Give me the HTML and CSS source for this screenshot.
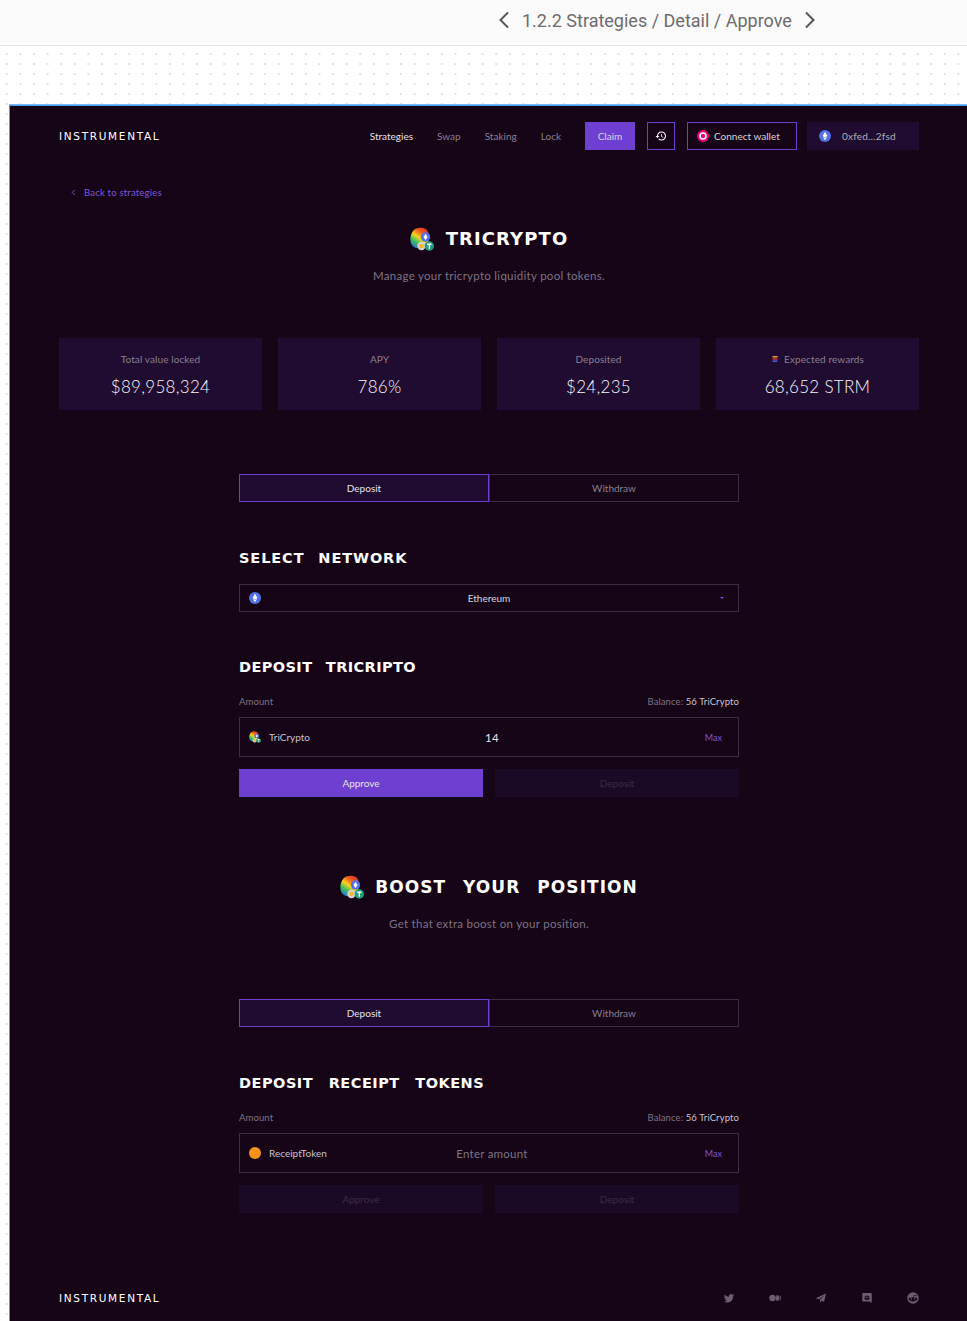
FILE: index.html
```html
<!DOCTYPE html>
<html lang="en">

<head>
  <meta charset="UTF-8">
  <meta name="viewport" content="width=device-width, initial-scale=1.0">
  <title>1.2.2 Strategies / Detail / Approve</title>
  <link rel="stylesheet" href="styles.css">
</head>

<body>
<svg class="defs" width="0" height="0" aria-hidden="true">
  <defs>
    <linearGradient id="blob" x1="0.8" y1="0" x2="0.2" y2="1">
      <stop offset="0" stop-color="#e0262c" />
      <stop offset="0.3" stop-color="#f0701d" />
      <stop offset="0.5" stop-color="#f7d51d" />
      <stop offset="0.72" stop-color="#3fc35b" />
      <stop offset="1" stop-color="#2a6ad8" />
    </linearGradient>
    <symbol id="tricrypto" viewBox="0 0 24 24">
      <path d="M3 4 C6 0 12 0 16 2 C19 5 20 10 18 15 L10 21 C5 22 1 19 0.500 14 C0 10 1 7 3 4z" fill="url(#blob)" />
      <circle cx="15.500" cy="10" r="4.700" fill="#5470e8" />
      <path d="M15.500 6.800 17.500 10 15.500 13.200 13.500 10z" fill="#fff" />
      <circle cx="11.500" cy="19" r="4.200" fill="#d8d3d0" />
      <circle cx="11.500" cy="19" r="2.300" fill="#f4b731" />
      <circle cx="19.300" cy="19" r="4.700" fill="#26a17b" />
      <path d="M17.200 16.600h4.200v1.300h-1.450v3.800h-1.300v-3.800h-1.450z" fill="#fff" />
    </symbol>
    <symbol id="eth" viewBox="0 0 12 12">
      <circle cx="6" cy="6" r="6" fill="#5470e8" />
      <path d="M6 1.800 8.400 6 6 7.400 3.600 6zM3.800 6.800 6 8.100l2.200-1.300L6 10.200z" fill="#fff" />
    </symbol>
  </defs>
</svg>

<div class="topbar">
  <svg class="topbar-arrow" viewBox="0 0 12 18"><path d="M10 1.500 2.500 9l7.500 7.500" /></svg>
  <span class="topbar-title">1.2.2 Strategies / Detail / Approve</span>
  <svg class="topbar-arrow" viewBox="0 0 12 18"><path d="M2 1.500 9.500 9 2 16.500" /></svg>
</div>

<div class="canvas">
  <div class="frame">
    <header class="nav">
      <div class="logo">INSTRUMENTAL</div>
      <nav class="nav-links">
        <a class="nav-link active">Strategies</a>
        <a class="nav-link">Swap</a>
        <a class="nav-link">Staking</a>
        <a class="nav-link">Lock</a>
      </nav>
      <button class="btn-claim">Claim</button>
      <button class="btn-history">
        <svg viewBox="0 0 24 24" width="12" height="12"><path fill="#fff" d="M13 3a9 9 0 0 0-9 9H1l3.890 3.890.07.14L9 12H6c0-3.870 3.130-7 7-7s7 3.130 7 7-3.130 7-7 7c-1.930 0-3.680-.79-4.940-2.060l-1.420 1.420A8.954 8.954 0 0 0 13 21a9 9 0 0 0 0-18zm-1 5v5l4.280 2.540.72-1.210-3.500-2.080V8H12z" /></svg>
      </button>
      <button class="btn-connect">
        <svg viewBox="0 0 12 12" width="12" height="12"><circle cx="6" cy="6" r="6" fill="#e6007a" /><circle cx="6" cy="6" r="3" fill="none" stroke="#fff" stroke-width="1.500" /></svg>
        Connect wallet
      </button>
      <div class="wallet">
        <svg width="12" height="12"><use href="#eth" /></svg>
        0xfed...2fsd
      </div>
    </header>

    <a class="back-link">
      <svg viewBox="0 0 6 8" width="5" height="7"><path d="M4.500 1 1.500 4l3 3" fill="none" stroke="#7d55dd" stroke-width="1.200" /></svg>
      Back to strategies
    </a>

    <section class="hero hero-first">
      <div class="hero-title">
        <svg width="24" height="24"><use href="#tricrypto" /></svg>
        <h1>TRICRYPTO</h1>
      </div>
      <p class="hero-sub">Manage your tricrypto liquidity pool tokens.</p>
    </section>

    <section class="stats">
      <div class="stat">
        <div class="stat-label">Total value locked</div>
        <div class="stat-value">$89,958,324</div>
      </div>
      <div class="stat">
        <div class="stat-label">APY</div>
        <div class="stat-value">786%</div>
      </div>
      <div class="stat">
        <div class="stat-label">Deposited</div>
        <div class="stat-value">$24,235</div>
      </div>
      <div class="stat">
        <div class="stat-label">
          <svg viewBox="0 0 8 8" width="8" height="8"><rect x="1.500" y="1" width="5" height="1.500" fill="#e6a23c" /><rect x="1.500" y="3.200" width="5" height="1.500" fill="#d8352f" /><rect x="1.500" y="5.400" width="5" height="1.500" fill="#4a63e0" /></svg>
          Expected rewards
        </div>
        <div class="stat-value">68,652 STRM</div>
      </div>
    </section>

    <main class="column">
      <div class="tabs">
        <div class="tab active">Deposit</div>
        <div class="tab">Withdraw</div>
      </div>

      <h2 class="section-title title-network">SELECT NETWORK</h2>
      <div class="select">
        <svg width="12" height="12"><use href="#eth" /></svg>
        <span class="select-value">Ethereum</span>
        <span class="select-caret"></span>
      </div>

      <h2 class="section-title title-deposit">DEPOSIT TRICRIPTO</h2>
      <div class="amount-head">
        <span>Amount</span>
        <span>Balance: <b>56 TriCrypto</b></span>
      </div>
      <div class="amount-box">
        <div class="token">
          <svg width="12" height="12"><use href="#tricrypto" /></svg>
          TriCrypto
        </div>
        <input class="amount-input" type="text" value="14" placeholder="Enter amount">
        <a class="max">Max</a>
      </div>
      <div class="actions">
        <button class="action primary">Approve</button>
        <button class="action">Deposit</button>
      </div>

      <section class="hero hero-boost">
        <div class="hero-title">
          <svg width="24" height="24"><use href="#tricrypto" /></svg>
          <h1>BOOST YOUR POSITION</h1>
        </div>
        <p class="hero-sub">Get that extra boost on your position.</p>
      </section>

      <div class="tabs">
        <div class="tab active">Deposit</div>
        <div class="tab">Withdraw</div>
      </div>

      <h2 class="section-title title-receipt">DEPOSIT RECEIPT TOKENS</h2>
      <div class="amount-head">
        <span>Amount</span>
        <span>Balance: <b>56 TriCrypto</b></span>
      </div>
      <div class="amount-box">
        <div class="token">
          <span class="token-dot"></span>
          ReceiptToken
        </div>
        <input class="amount-input" type="text" placeholder="Enter amount">
        <a class="max">Max</a>
      </div>
      <div class="actions">
        <button class="action">Approve</button>
        <button class="action">Deposit</button>
      </div>
    </main>

    <footer class="footer">
      <div class="logo">INSTRUMENTAL</div>
      <div class="socials">
        <svg viewBox="0 0 24 24"><path d="M22.460 6c-.77.35-1.600.58-2.460.69.88-.53 1.560-1.370 1.880-2.380-.83.5-1.750.85-2.720 1.050C18.370 4.500 17.260 4 16 4c-2.350 0-4.270 1.920-4.270 4.290 0 .34.04.67.11.98C8.280 9.090 5.110 7.380 3 4.790c-.37.63-.58 1.370-.58 2.150 0 1.490.75 2.810 1.910 3.560-.71 0-1.370-.2-1.950-.5v.03c0 2.080 1.480 3.820 3.440 4.210a4.220 4.220 0 0 1-1.930.07 4.280 4.280 0 0 0 4 2.980 8.521 8.521 0 0 1-5.330 1.840c-.34 0-.68-.02-1.020-.06C3.440 20.290 5.700 21 8.120 21 16 21 20.330 14.460 20.330 8.790c0-.19 0-.37-.01-.56.84-.6 1.560-1.360 2.140-2.230z" /></svg>
        <svg viewBox="0 0 24 24"><ellipse cx="7" cy="12" rx="6.500" ry="6.500" /><ellipse cx="17" cy="12" rx="3.200" ry="6" /><ellipse cx="22.300" cy="12" rx="1.200" ry="5.300" /></svg>
        <svg viewBox="0 0 24 24"><path d="M22 3 1.500 12.500l6.500 2L18.500 7 10 15.500V21l3.500-3.800 4.500 2.800z" /></svg>
        <svg viewBox="0 0 24 24"><path fill-rule="evenodd" d="M4 2h16a1.500 1.500 0 0 1 1.500 1.500V22l-4-3H4a1.500 1.500 0 0 1-1.500-1.500v-14A1.500 1.500 0 0 1 4 2zm3 12.500c3 1.500 7 1.500 10 0l-1-6.500c-2.500-1-5.500-1-8 0zM9.500 9.500h2v2.500h-2zm3 0h2v2.500h-2z" /></svg>
        <svg viewBox="0 0 24 24"><path fill-rule="evenodd" d="M12 .5a11.500 11.500 0 1 1 0 23 11.500 11.500 0 0 1 0-23zM4.500 11.500c-1.500 0-2 2-.8 2.600C4 17 7.500 19 12 19s8-2 8.300-4.900c1.200-.6.7-2.600-.8-2.600-.6 0-1 .2-1.300.5-1.400-1-3.400-1.600-5.400-1.700l1-3.300 2.700.6a1.300 1.300 0 1 0 .2-1l-3.300-.7-1.300 4.400c-2.100.1-4 .7-5.300 1.700-.3-.3-.8-.5-1.300-.5zM8.800 12.300a1.500 1.500 0 1 1 0 3 1.500 1.500 0 0 1 0-3zm6.400 0a1.500 1.500 0 1 1 0 3 1.500 1.500 0 0 1 0-3z" /></svg>
      </div>
    </footer>
  </div>
</div>
</body>

</html>
```

FILE: styles.css
```css
* {
  box-sizing: border-box;
}

html, body {
  margin: 0;
  height: 1321px;
  overflow: hidden;
}

body {
  display: flex;
  flex-direction: column;
  background: #fff;
  font-family: Lato, 'Noto Sans', sans-serif;
}

.defs {
  position: absolute;
}

.topbar {
  display: flex;
  align-items: center;
  gap: 12px;
  height: 46px;
  flex: none;
  padding: 0 0 5px 498px;
  background: #fafafa;
  border-bottom: 1px solid #e6e6e6;
  color: #6f6a6f;
  font-family: Roboto, sans-serif;
  font-size: 18px;
}

.topbar-arrow {
  width: 12px;
  height: 18px;
  fill: none;
  stroke: #58545a;
  stroke-width: 2;
}

.canvas {
  flex: 1;
  min-height: 0;
  padding: 59px 0 0 9px;
  background-color: #fff;
  background-image: radial-gradient(circle, #d4d4d4 0.6px, transparent 0.9px);
  background-size: 13.600px 10px;
  background-position: 0 3px;
}

.frame {
  height: 100%;
  padding: 16px 48px 0 49px;
  background: #150517;
  border-top: 1px solid #4a9df0;
  border-left: 1px solid #4a9df0;
  box-shadow: 0 -1px 0 rgba(74, 157, 240, 0.7);
  color: #fff;
}

.nav {
  display: flex;
  align-items: center;
  height: 28px;
}

.logo {
  flex: 1;
  font-family: 'DejaVu Sans', sans-serif;
  font-size: 10.500px;
  font-weight: 400;
  letter-spacing: 1.680px;
  line-height: 28px;
}

.nav-links {
  display: flex;
  gap: 24px;
  margin-right: 24px;
  font-size: 10px;
}

.nav-link {
  color: #8b7f90;
}

.nav-link.active {
  color: #e6e2e8;
}

button {
  font-family: inherit;
  font-size: 10px;
  color: #fff;
  background: none;
  border: 0;
  padding: 0;
}

.btn-claim {
  width: 50px;
  height: 28px;
  background: #6e3fd1;
  color: #ddd3f4;
}

.btn-history {
  display: flex;
  align-items: center;
  justify-content: center;
  width: 28px;
  height: 28px;
  margin-left: 12px;
  border: 1px solid #6e3fd1;
}

.btn-connect {
  display: flex;
  align-items: center;
  gap: 5px;
  width: 110px;
  height: 28px;
  margin-left: 12px;
  padding-left: 9px;
  border: 1px solid #6e3fd1;
  color: #d8d4da;
}

.wallet {
  display: flex;
  align-items: center;
  gap: 11px;
  width: 112px;
  height: 28px;
  margin-left: 10px;
  padding-left: 12px;
  background: #1f0c30;
  color: #b5adb9;
  font-size: 10px;
  letter-spacing: 0.200px;
}

.back-link {
  display: flex;
  align-items: center;
  gap: 8px;
  margin: 36px 0 0 12px;
  height: 12px;
  color: #7d55dd;
  font-size: 9.500px;
  letter-spacing: 0.200px;
}

.hero {
  text-align: center;
}

.hero-first {
  margin-top: 29px;
}

.hero-title {
  display: flex;
  align-items: center;
  justify-content: center;
  gap: 12px;
  height: 24px;
}

.hero-title h1 {
  margin: 0;
  font-family: 'DejaVu Sans', sans-serif;
  font-size: 18px;
  font-weight: 700;
  letter-spacing: 1.100px;
  line-height: 24px;
}

.hero-sub {
  margin: 18px 0 0;
  color: #7f7385;
  font-size: 11.500px;
  letter-spacing: 0.280px;
  line-height: 14px;
}

.stats {
  display: grid;
  grid-template-columns: repeat(4, 1fr);
  gap: 16px;
  margin-top: 55px;
}

.stat {
  height: 72px;
  padding-top: 15px;
  background: #1f0c30;
  text-align: center;
}

.stat-label {
  display: flex;
  align-items: center;
  justify-content: center;
  gap: 5px;
  height: 12px;
  color: #8b7f90;
  font-size: 10px;
  letter-spacing: 0.100px;
}

.stat-value {
  margin-top: 9px;
  color: #f8f6f9;
  font-size: 17px;
  font-weight: 300;
  letter-spacing: 0.300px;
  line-height: 26px;
}

.column {
  width: 500px;
  margin: 64px 0 0 180px;
}

.tabs {
  display: grid;
  grid-template-columns: 1fr 1fr;
  height: 28px;
}

.tab {
  display: flex;
  align-items: center;
  justify-content: center;
  border: 1px solid #3a2c44;
  color: #8b7f90;
  font-size: 10px;
}

.tab.active {
  border-color: #6e3fd1;
  background: #1f0c30;
  color: #e6e2e8;
}

.section-title {
  margin: 0;
  font-family: 'DejaVu Sans', sans-serif;
  font-size: 14.500px;
  font-weight: 700;
  line-height: 14px;
  white-space: pre;
}

.title-network {
  margin-top: 49px;
  letter-spacing: 0.900px;
  word-spacing: 8px;
}

.title-deposit {
  margin-top: 48px;
  letter-spacing: 0.400px;
  word-spacing: 8px;
}

.title-receipt {
  margin-top: 49px;
  letter-spacing: 0.500px;
  word-spacing: 10px;
}

.select {
  display: grid;
  grid-template-columns: 1fr auto 1fr;
  align-items: center;
  height: 28px;
  margin-top: 19px;
  padding: 0 14px;
  border: 1px solid #3a2c44;
}

.select svg {
  margin-left: -5px;
}

.select-value {
  color: #dcd8de;
  font-size: 10px;
}

.select-caret {
  justify-self: end;
  width: 0;
  height: 0;
  border-left: 2px solid transparent;
  border-right: 2px solid transparent;
  border-top: 2px solid #7a48e6;
}

.amount-head {
  display: flex;
  justify-content: space-between;
  align-items: center;
  height: 12px;
  margin-top: 21px;
  color: #7f7385;
  font-size: 9.500px;
  letter-spacing: 0.100px;
}

.amount-head b {
  color: #c9c3cc;
  font-weight: 400;
}

.amount-box {
  display: grid;
  grid-template-columns: 178px 130px 1fr;
  align-items: center;
  height: 40px;
  margin-top: 10px;
  padding: 0 16px 0 9px;
  border: 1px solid #3a2c44;
}

.token {
  display: flex;
  align-items: center;
  gap: 8px;
  color: #c9c3cc;
  font-size: 10px;
}

.token-dot {
  width: 12px;
  height: 12px;
  border-radius: 50%;
  background: #f7931a;
}

.amount-input {
  width: 100%;
  padding: 0;
  border: 0;
  outline: 0;
  background: none;
  color: #e6e2e8;
  font-family: inherit;
  font-size: 11.500px;
  letter-spacing: 0.250px;
  text-align: center;
}

.amount-input::placeholder {
  color: #7f7385;
  opacity: 1;
}

.max {
  justify-self: end;
  color: #7d55dd;
  font-size: 9px;
}

.actions {
  display: grid;
  grid-template-columns: 1fr 1fr;
  gap: 12px;
  margin-top: 12px;
}

.action {
  height: 28px;
  background: #1b0a26;
  color: #3a2c44;
}

.action.primary {
  background: #6e3fd1;
  color: #e6e2e8;
}

.hero-boost {
  margin-top: 78px;
}

.hero-boost .hero-title {
  gap: 11px;
}

.hero-boost .hero-title h1 {
  font-size: 17px;
  letter-spacing: 1.050px;
  word-spacing: 10px;
}

.hero-boost + .tabs {
  margin-top: 68px;
}

.footer {
  display: flex;
  align-items: center;
  margin-top: 71px;
  height: 28px;
}

.socials {
  display: flex;
  gap: 34px;
}

.socials svg {
  width: 12px;
  height: 12px;
  fill: #6b5c70;
}
```
